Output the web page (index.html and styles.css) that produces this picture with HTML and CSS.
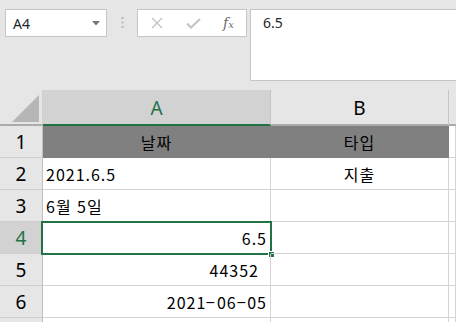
FILE: index.html
```html
<!DOCTYPE html>
<html lang="ko">
<head>
    <meta charset="UTF-8">
    <title>Sheet</title>
    <link rel="stylesheet" href="styles.css">
</head>
<body>
    <!-- Formula bar -->
    <div class="toolbar">
        <div class="name-box">
            <span>A4</span>
            <svg class="caret" width="8" height="5" viewBox="0 0 8 5"><path d="M0 0 H8 L4 4.5 Z" fill="#777"/></svg>
        </div>
        <div class="sep">
            <svg width="3" height="11" viewBox="0 0 3 11"><rect x="0.5" y="0" width="2" height="2" fill="#b8b8b8"/><rect x="0.5" y="4.5" width="2" height="2" fill="#b8b8b8"/><rect x="0.5" y="9" width="2" height="2" fill="#b8b8b8"/></svg>
        </div>
        <div class="fx-box">
            <svg width="12" height="12" viewBox="0 0 12 12"><path d="M1 1 L11 11 M11 1 L1 11" stroke="#c4c4c4" stroke-width="1.4" fill="none"/></svg>
            <svg width="15" height="11" viewBox="0 0 15 11"><path d="M1 5.5 L5 9.5 L14 1" stroke="#c4c4c4" stroke-width="2.2" fill="none"/></svg>
            <span class="fx">f<sub>x</sub></span>
        </div>
        <div class="formula-input">6.5</div>
    </div>

    <!-- Sheet grid -->
    <div class="sheet">
        <div class="corner"><div class="tri"></div></div>
        <div class="col-head active">A</div>
        <div class="col-head">B</div>
        <div class="col-head rest"></div>

        <div class="row-head">1</div>
        <div class="cell title center">날짜</div>
        <div class="cell title center">타입</div>
        <div class="cell"></div>

        <div class="row-head">2</div>
        <div class="cell">2021.6.5</div>
        <div class="cell center">지출</div>
        <div class="cell"></div>

        <div class="row-head">3</div>
        <div class="cell">6월 5일</div>
        <div class="cell"></div>
        <div class="cell"></div>

        <div class="row-head active">4</div>
        <div class="cell right selected">6.5<div class="sel-box"><div class="handle"></div></div></div>
        <div class="cell"></div>
        <div class="cell"></div>

        <div class="row-head">5</div>
        <div class="cell right num">44352</div>
        <div class="cell"></div>
        <div class="cell"></div>

        <div class="row-head">6</div>
        <div class="cell right">2021<span class="dash">-</span>06<span class="dash">-</span>05</div>
        <div class="cell"></div>
        <div class="cell"></div>

        <div class="row-head"></div>
        <div class="cell"></div>
        <div class="cell"></div>
        <div class="cell"></div>
    </div>
</body>
</html>
```

FILE: styles.css
```css
* {
    margin: 0;
    padding: 0;
    box-sizing: border-box;
}

body {
    width: 456px;
    height: 322px;
    overflow: hidden;
    background: #e6e6e6;
    font-family: "Noto Sans", sans-serif;
    color: #000;
}

/* Formula bar */
.toolbar {
    display: flex;
    align-items: flex-start;
    height: 90px;
    padding-top: 9px;
}

.name-box {
    display: flex;
    align-items: center;
    justify-content: space-between;
    width: 102px;
    height: 28px;
    margin-left: 5px;
    padding: 0 6px 0 7px;
    background: #fff;
    border: 1px solid #c6c6c6;
    font-size: 14px;
    color: #262626;
}

.sep {
    display: flex;
    justify-content: center;
    width: 30px;
    padding-top: 8px;
}

.fx-box {
    display: flex;
    align-items: center;
    width: 110px;
    height: 28px;
    padding-left: 13px;
    gap: 23px;
    background: #fff;
    border: 1px solid #c6c6c6;
}

.fx {
    font-family: "DejaVu Serif", serif;
    font-style: italic;
    font-size: 14px;
    color: #6b6b6b;
    margin-left: -1px;
}

.fx sub {
    font-size: 10px;
    vertical-align: 0;
}

.formula-input {
    flex: 1;
    height: 72px;
    margin-left: 3px;
    margin-right: -4px;
    padding: 3px 0 0 12px;
    background: #fff;
    border: 1px solid #c6c6c6;
    font-size: 14px;
    color: #262626;
}

/* Grid */
.sheet {
    display: grid;
    grid-template-columns: 43px 228px 178px 1fr;
    grid-template-rows: 36px repeat(7, 32px);
    background: #fff;
}

.corner {
    position: relative;
    background: #e6e6e6;
    border-right: 1px solid #d0d0d0;
    border-bottom: 2px solid #ababab;
}

.tri {
    position: absolute;
    left: 12px;
    top: 5px;
    width: 27px;
    height: 27px;
    background: #b6b6b6;
    clip-path: polygon(100% 0, 100% 100%, 0 100%);
}

.col-head {
    display: flex;
    align-items: center;
    justify-content: center;
    background: #e6e6e6;
    border-right: 1px solid #c6c6c6;
    border-bottom: 2px solid #ababab;
    font-size: 19px;
    padding-top: 2px;
}

.col-head.active {
    background: #d2d2d2;
    color: #217346;
    border-bottom-color: #217346;
}

.col-head.rest {
    border-right: none;
}

.row-head {
    display: flex;
    align-items: center;
    justify-content: center;
    background: #e6e6e6;
    border-right: 1px solid #c0c0c0;
    border-bottom: 1px solid #cfcfcf;
    font-size: 19px;
}

.row-head.active {
    background: #d2d2d2;
    color: #217346;
}

.cell {
    position: relative;
    display: flex;
    align-items: center;
    padding: 0 3px;
    border-right: 1px solid #d4d4d4;
    border-bottom: 1px solid #d4d4d4;
    font-family: "Noto Sans CJK KR", sans-serif;
    font-size: 16px;
    letter-spacing: 1px;
}

.cell.center {
    justify-content: center;
}

.cell.right {
    justify-content: flex-end;
}

.cell.num {
    padding-right: 11px;
}

.cell.title {
    background: #808080;
    border-color: #808080;
}

/* wide hyphen like the sheet's default font */
.dash {
    display: inline-block;
    transform: scaleX(1.9);
    margin: 0 2px;
}

.sel-box {
    position: absolute;
    left: -2px;
    top: -1px;
    width: 231px;
    height: 34px;
    border: 2px solid #217346;
}

.handle {
    position: absolute;
    right: -5px;
    bottom: -5px;
    width: 7px;
    height: 7px;
    background: #217346;
    border: 1px solid #fff;
}
```
